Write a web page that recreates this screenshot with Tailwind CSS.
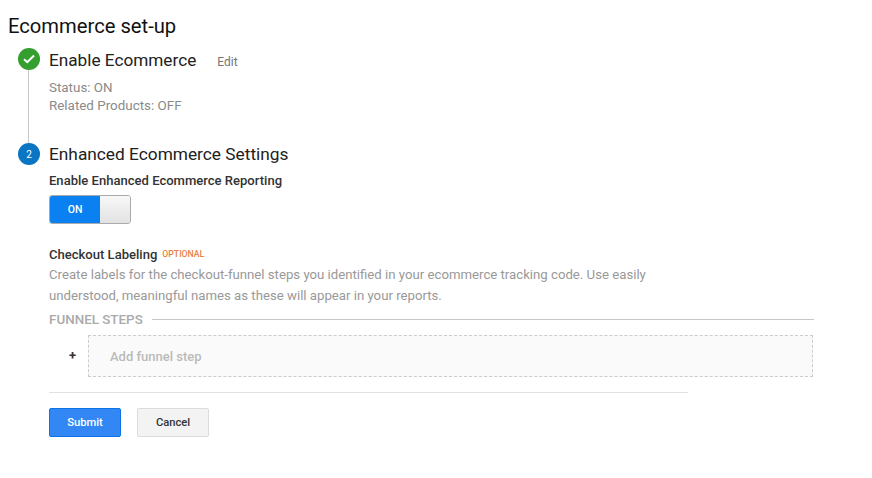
<!DOCTYPE html>
<html lang="en">
<head>
    <meta charset="UTF-8">
    <title>Ecommerce set-up</title>
    <script src="https://cdn.jsdelivr.net/npm/@tailwindcss/browser@4"></script>
</head>
<body class="bg-white font-['Roboto',sans-serif] w-[872px] h-[478px] overflow-hidden">
    <h1 class="text-[20.2px] leading-[24px] text-[#111] pl-[8px] pt-[14px]">Ecommerce set-up</h1>

    <div class="flex pl-[18px] pt-[10px]">
        <!-- Step rail -->
        <div class="w-[22px] flex flex-col items-center shrink-0">
            <div class="w-[22px] h-[22px] rounded-full bg-[#349e2f] flex items-center justify-center shrink-0">
                <svg width="12" height="10" viewBox="0 0 12 10" fill="none"><path d="M1 5.2 L4.3 8.2 L11 1.5" stroke="#fff" stroke-width="2"/></svg>
            </div>
            <div class="w-px h-[73px] bg-[#c8c8c8] mr-px"></div>
            <div class="w-[22px] h-[22px] rounded-full bg-[#0a75c2] flex items-center justify-center text-white text-[10px] shrink-0">2</div>
        </div>

        <!-- Step content -->
        <div class="pl-[9px]">
            <div class="flex items-baseline h-[22px] pt-px">
                <span class="text-[17.2px] leading-[22px] text-[#212121]">Enable Ecommerce</span>
                <span class="text-[12px] text-[#757575] ml-[21px]">Edit</span>
            </div>
            <div class="text-[13.4px] leading-[18px] text-[#8a8a8a] pt-[9px]">
                <p>Status: ON</p>
                <p>Related Products: OFF</p>
            </div>
            <div class="text-[17.3px] leading-[22px] text-[#212121] mt-[28px]">Enhanced Ecommerce Settings</div>
            <div class="text-[13.05px] leading-[16px] font-medium text-[#333] mt-[8px]">Enable Enhanced Ecommerce Reporting</div>

            <div class="flex w-[82px] h-[29px] mt-[6px] rounded-[3px] overflow-hidden border border-[#aaa]">
                <div class="w-[51px] bg-[#0b80f0] text-white text-[10.5px] font-medium flex items-center justify-center -m-px mr-0 pt-px pl-px">ON</div>
                <div class="flex-1 bg-gradient-to-b from-[#f8f8f8] to-[#e2e2e2]"></div>
            </div>

            <div class="flex items-baseline mt-[22px]">
                <span class="text-[13.05px] leading-[18px] font-medium text-[#333]">Checkout Labeling</span>
                <span class="text-[8.7px] font-medium text-[#e8813f] ml-[5px] -translate-y-[2px]">OPTIONAL</span>
            </div>
            <p class="text-[13.2px] leading-[20.5px] text-[#999] w-[640px] mt-px">Create labels for the checkout-funnel steps you identified in your ecommerce tracking code. Use easily understood, meaningful names as these will appear in your reports.</p>

            <div class="flex items-center w-[765px] mt-[5px]">
                <span class="text-[13.4px] leading-[18px] font-medium text-[#aaa]">FUNNEL STEPS</span>
                <div class="flex-1 h-px bg-[#c8c8c8] ml-[9px] -translate-y-px"></div>
            </div>

            <div class="flex items-center mt-[6px]">
                <span class="w-[39px] pl-[20px] text-[13px] font-bold text-[#333]">+</span>
                <div class="w-[725px] h-[42px] border border-dashed border-[#ccc] bg-[#fafafa] flex items-center pl-[21px] pt-[2px] text-[13px] font-medium text-[#bbb]">Add funnel step</div>
            </div>

            <div class="w-[639px] h-px bg-[#e2e2e2] mt-[15px]"></div>

            <div class="flex gap-[16px] mt-[15px]">
                <button class="w-[72px] h-[29px] rounded-[2px] border border-[#0b74e5] bg-[#3287f5] text-white text-[11.2px] font-medium pt-[2px]">Submit</button>
                <button class="w-[72px] h-[29px] rounded-[2px] border border-[#dcdcdc] bg-[#f3f3f3] text-[#333] text-[11.2px] font-medium pt-[2px]">Cancel</button>
            </div>
        </div>
    </div>
</body>
</html>
